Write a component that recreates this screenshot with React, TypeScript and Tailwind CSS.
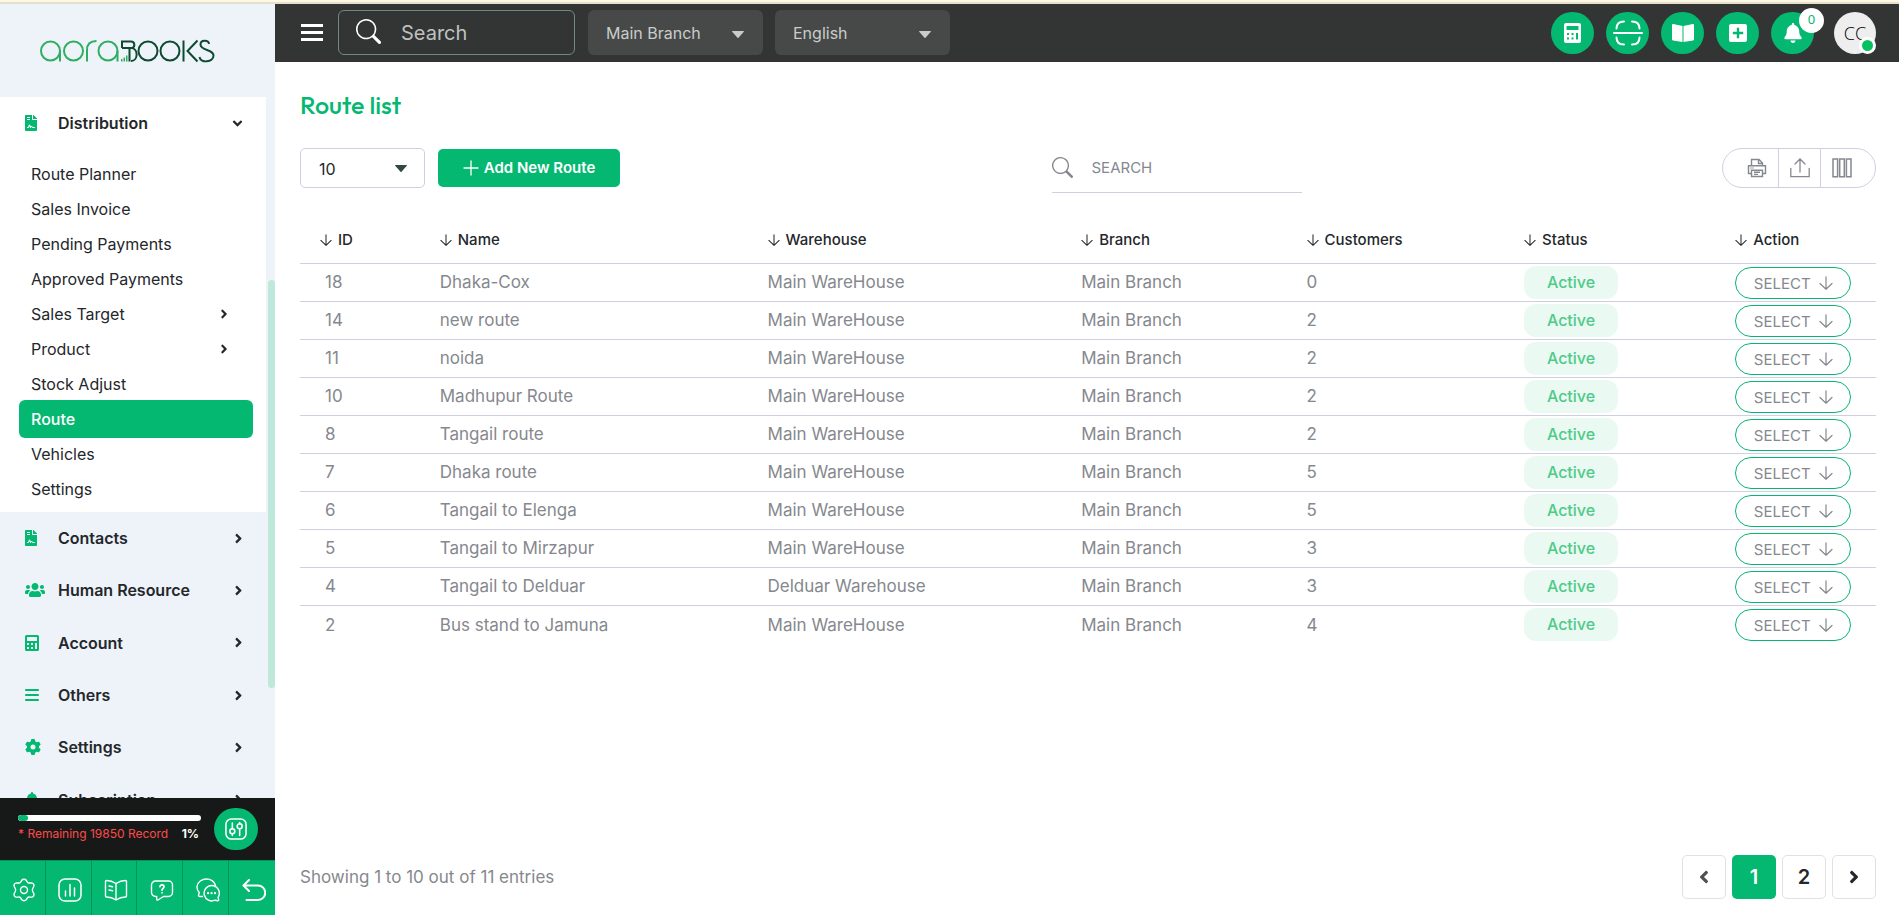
import React from "react";
import { BsSearch } from "react-icons/bs";
import { FaAngleDown, FaAngleLeft, FaAngleRight, FaFileContract, FaUsers } from "react-icons/fa";
import { FaGear, FaBars, FaBell } from "react-icons/fa6";

type Group = { label: string; icon: React.ReactNode };

const subItems = [
  { label: "Route Planner" },
  { label: "Sales Invoice" },
  { label: "Pending Payments" },
  { label: "Approved Payments" },
  { label: "Sales Target", nested: true },
  { label: "Product", nested: true },
  { label: "Stock Adjust" },
  { label: "Route", active: true },
  { label: "Vehicles" },
  { label: "Settings" },
];

const CalcOutline = () => (
  <svg viewBox="0 0 14 16" className="h-4 w-[14px]" fill="currentColor" aria-hidden="true">
    <path
      fillRule="evenodd"
      d="M1.5 0h11A1.5 1.5 0 0 1 14 1.500v13a1.500 1.500 0 0 1-1.500 1.500h-11A1.500 1.500 0 0 1 0 14.500v-13A1.500 1.500 0 0 1 1.500 0ZM2 2v4h10V2ZM2 8v2h2V8Zm4 0v2h2V8Zm-4 4v2h2v-2Zm4 0v2h2v-2Zm4-4v6h2V8Z"
    />
  </svg>
);

const CalcSolid = () => (
  <svg viewBox="0 0 17 20" className="h-5 w-[17px]" fill="currentColor" aria-hidden="true">
    <path
      fillRule="evenodd"
      d="M2 0h13a2 2 0 0 1 2 2v16a2 2 0 0 1-2 2H2a2 2 0 0 1-2-2V2a2 2 0 0 1 2-2ZM2.500 3v4h12V3ZM3 10v2h2v-2Zm4.500 0v2h2v-2ZM3 14.500v2h2v-2Zm4.500 0v2h2v-2ZM12 10v6.500h2V10Z"
    />
  </svg>
);

const groups: Group[] = [
  { label: "Contacts", icon: <FaFileContract className="h-4 w-3" /> },
  { label: "Human Resource", icon: <FaUsers size={20} /> },
  { label: "Account", icon: <CalcOutline /> },
  { label: "Others", icon: <FaBars className="h-4 w-[14px]" /> },
  { label: "Settings", icon: <FaGear size={16} /> },
  { label: "Subscription", icon: <FaBell className="h-4 w-[14px]" /> },
];

const rows = [
  [18, "Dhaka-Cox", "Main WareHouse", 0],
  [14, "new route", "Main WareHouse", 2],
  [11, "noida", "Main WareHouse", 2],
  [10, "Madhupur Route", "Main WareHouse", 2],
  [8, "Tangail route", "Main WareHouse", 2],
  [7, "Dhaka route", "Main WareHouse", 5],
  [6, "Tangail to Elenga", "Main WareHouse", 5],
  [5, "Tangail to Mirzapur", "Main WareHouse", 3],
  [4, "Tangail to Delduar", "Delduar Warehouse", 3],
  [2, "Bus stand to Jamuna", "Main WareHouse", 4],
];

const columns = [
  { label: "ID", width: "w-[7.6%]" },
  { label: "Name", width: "w-[20.8%]" },
  { label: "Warehouse", width: "w-[19.9%]" },
  { label: "Branch", width: "w-[14.3%]" },
  { label: "Customers", width: "w-[13.8%]" },
  { label: "Status", width: "w-[13.4%]" },
  { label: "Action", width: "w-[10.2%]" },
];

function Logo() {
  return (
    <svg viewBox="0 0 176 24" className="h-6 w-44" fill="none" strokeWidth="2" role="img" aria-label="aoraBooks">
      <g stroke="#2fae62">
        <circle cx="10.500" cy="12" r="9.500" />
        <path d="M20 12v10.500" />
        <circle cx="33.500" cy="12" r="9.500" />
        <path d="M47 22.500V11c0-6 3-9 9.500-9" />
        <circle cx="68" cy="12" r="9.500" />
        <path d="M77.500 12v10.500" />
      </g>
      <g fill="#2fae62">
        <path d="M81 20h1.500v2.500H81zM83.500 18.500H85v4h-1.500zM86 16.500h1.500v6H86z" />
      </g>
      <g stroke="#0d4a30">
        <path d="M82 9V2.500h9c4 0 4.500 5.500 1 6.500H82M91 9c7.500 0 7.500 13 0 13M89.500 9.500V22.500" />
        <circle cx="108" cy="12" r="9.500" />
        <circle cx="130" cy="12" r="9.500" />
        <path d="M143.500 1.500v21M157.500 1.500 147.500 12l10 10.500" />
        <path d="M169 5c-.5-4.500-8.500-4.500-8.500.5 0 6.500 13 4.500 13 11 0 7-13 8-14 1.500" />
      </g>
    </svg>
  );
}

const line = {
  fill: "none",
  stroke: "currentColor",
  strokeLinecap: "round" as const,
  strokeLinejoin: "round" as const,
  "aria-hidden": true,
};

const ArrowDown = ({ className }: { className: string }) => (
  <svg viewBox="0 0 14 14" className={className} strokeWidth="1.200" {...line}>
    <path d="M7 .8v12.400M1 7.500l6 5.700 6-5.700" />
  </svg>
);

const PlusLine = () => (
  <svg viewBox="0 0 16 16" className="size-4" strokeWidth="1.300" {...line}>
    <path d="M8 1v14M1 8h14" />
  </svg>
);

const GearLine = () => (
  <svg viewBox="0 0 24 24" className="size-6" strokeWidth="1.400" {...line}>
    <circle cx="12" cy="12" r="3.500" />
    <path d="M9.800 2.200c1-1.200 3.400-1.200 4.400 0l1.200 1.900c.5.700 1.200 1 2 .900l2.200-.1c1.700 0 2.900 2 2.200 3.600l-1.100 2c-.4.900-.4 2.100 0 3l1.100 2c.7 1.600-.5 3.600-2.200 3.600l-2.200-.1c-.8-.1-1.500.2-2 .9l-1.200 1.900c-1 1.200-3.400 1.200-4.400 0l-1.200-1.900c-.5-.7-1.200-1-2-.9l-2.200.1c-1.700 0-2.900-2-2.200-3.600l1.100-2c.4-.9.4-2.100 0-3l-1.100-2c-.7-1.600.5-3.600 2.200-3.600l2.200.1c.8.100 1.500-.2 2-.9z" />
  </svg>
);

const ChartLine = () => (
  <svg viewBox="0 0 24 24" className="size-6" strokeWidth="1.500" {...line}>
    <rect x="1" y="1" width="22" height="22" rx="6" />
    <path d="M7.500 13v5M12 6.500V18M16.500 10v8" />
  </svg>
);

const BookLine = () => (
  <svg viewBox="0 0 24 24" className="size-6" strokeWidth="1.400" {...line}>
    <path d="M12 5.500C9 3.500 5.500 2.500 2.500 2.500c-.6 0-1 .4-1 1V18c0 .6.400 1 1 1 3 .1 6.500 1 9.500 3 3-2 6.500-2.900 9.500-3 .6 0 1-.4 1-1V3.500c0-.6-.4-1-1-1-3 0-6.500 1-9.500 3zM12 5.500V22M5 8l3.500.8M5 12l3.500.8" />
  </svg>
);

const HelpLine = () => (
  <svg viewBox="0 0 24 24" className="size-6" strokeWidth="1.400" {...line}>
    <path d="M5.500 3h13A4 4 0 0 1 22.500 7v7.500a4 4 0 0 1-4 4h-5L8 22c-.7.400-1.300 0-1.300-.7v-2.800H5.500a4 4 0 0 1-4-4V7a4 4 0 0 1 4-4z" />
    <path d="M10 8.700c.2-2.400 4-2.400 4 0 0 1.600-2 1.800-2 3.500M12 14.700v.1" strokeWidth="1.700" />
  </svg>
);

const ChatLine = () => (
  <svg viewBox="0 0 24 24" className="size-6" strokeWidth="1.400" {...line}>
    <path d="M6.500 18.500H3.800c-1 0-1.500-.6-1.200-1.500l.6-2.500C1.500 12.500.8 10.500 1 8.500 1.500 4 6 1 10.500 1c4 0 7.500 2.300 9 6.200" />
    <path d="M15.500 7.500a7.700 7.700 0 1 0 3.500 14.700l2.700.6c.7.100 1.100-.4 1-1l-.6-2.500A7.700 7.700 0 0 0 15.500 7.500z" />
    <path d="M12 15.200h.1M15.500 15.200h.1M19 15.200h.1" strokeWidth="2.200" />
  </svg>
);

const ReturnLine = () => (
  <svg viewBox="0 0 24 24" className="size-6" strokeWidth="2" {...line}>
    <path d="M7 2 1.500 7.500 7 13M2 7.500h14a7 7 0 0 1 0 14.500H4.500" />
  </svg>
);

const SlidersLine = () => (
  <svg viewBox="0 0 24 24" className="size-[22px]" strokeWidth="1.700" {...line}>
    <rect x="1" y="1" width="22" height="22" rx="6" />
    <circle cx="8" cy="14.500" r="2.700" />
    <circle cx="16" cy="9" r="2.700" />
    <path d="M8 5.500v6.300M8 17.200V19M16 5v1.300M16 11.700V19" />
  </svg>
);

const ScanLine = () => (
  <svg viewBox="0 0 30 26" className="h-[26px] w-[30px]" strokeWidth="2" {...line}>
    <path d="M1 13h28M3.500 8.500C3.500 4 6 1.500 11 1.500M19 1.500c5 0 7.500 2.500 7.500 7M3.500 17.500c0 4.500 2.500 7 7.500 7M19 24.500c5 0 7.500-2.500 7.500-7" />
  </svg>
);

const BookSolid = () => (
  <svg viewBox="0 0 22 18" className="h-[18px] w-[22px]" fill="currentColor" aria-hidden="true">
    <path d="M0 1.200C0 .5.600 0 1.300.100L10.500 2v16L1 16.400c-.6-.1-1-.6-1-1.200zM22 1.200c0-.7-.6-1.200-1.300-1.100L11.500 2v16l9.500-1.600c.6-.1 1-.6 1-1.200z" />
  </svg>
);

const PlusSolid = () => (
  <svg viewBox="0 0 18 18" className="size-[18px]" fill="currentColor" aria-hidden="true">
    <path
      fillRule="evenodd"
      d="M2 0h14a2 2 0 0 1 2 2v14a2 2 0 0 1-2 2H2a2 2 0 0 1-2-2V2a2 2 0 0 1 2-2Zm5.800 3.800v4h-4v2.400h4v4h2.400v-4h4V7.800h-4v-4Z"
    />
  </svg>
);

const PrintLine = () => (
  <svg viewBox="0 0 20 20" className="size-5" strokeWidth="1.400" {...line} strokeLinecap="butt" strokeLinejoin="miter">
    <path d="M4.500 8V1.500h7.500L15.500 5v3M11.500 1.500V5.500h4M4.500 15.500H1.500V7.700h17v7.800h-3" />
    <path d="M4.500 12.200h11v6.300h-11zM7 14.300h6M7 16.400h4M3.500 10h1M5.500 10h1" />
  </svg>
);

const ExportLine = () => (
  <svg viewBox="0 0 20 20" className="size-5" strokeWidth="1.300" {...line} strokeLinejoin="miter">
    <path d="M10 14V1.500M5 6l5-5 5 5M.8 10.500v8.200h18.400v-8.200" />
  </svg>
);

const ColumnsLine = () => (
  <svg viewBox="0 0 20 20" className="size-5" strokeWidth="1.500" {...line} strokeLinejoin="miter">
    <path d="M1 1h4.600v17.800H1zM7.700 1h4.600v17.800H7.700zM14.400 1H19v17.800h-4.600z" />
  </svg>
);

const bottomTools = [
  { label: "Settings", icon: <GearLine /> },
  { label: "Reports", icon: <ChartLine /> },
  { label: "Ledger", icon: <BookLine /> },
  { label: "Help", icon: <HelpLine /> },
  { label: "Chat", icon: <ChatLine /> },
  { label: "Back", icon: <ReturnLine /> },
];

function Sidebar() {
  return (
    <aside className="relative flex w-[275px] shrink-0 flex-col bg-[#edf3f8] text-[#24272b]">
      <div className="flex h-[93px] shrink-0 items-center pl-10">
        <a href="#home">
          <Logo />
        </a>
      </div>
      <nav className="min-h-0 flex-1 overflow-hidden pr-[9px]" aria-label="Main menu">
        <div className="bg-white pb-[6px]">
          <button className="flex h-[52px] w-full items-center pr-[21px] pl-[25px] text-left font-semibold">
            <span className="w-[33px] shrink-0 text-[#04b871]">
              <FaFileContract className="h-4 w-3" />
            </span>
            <span className="flex-1">Distribution</span>
            <FaAngleDown size={15} />
          </button>
          <ul className="mt-[7px] pr-[13px] pl-[19px]">
            {subItems.map((item) => (
              <li key={item.label} className="flex h-[35px] items-center">
                <a
                  href="#menu"
                  className={
                    item.active
                      ? "flex h-[38px] w-full shrink-0 items-center rounded-md bg-[#04b871] px-3 font-medium text-white"
                      : "flex h-[38px] w-full shrink-0 items-center pr-[22px] pl-3"
                  }
                >
                  <span className="flex-1">{item.label}</span>
                  {item.nested && <FaAngleRight size={14} />}
                </a>
              </li>
            ))}
          </ul>
        </div>
        <div className="grid h-[314px] auto-rows-fr">
          {groups.map((g) => (
            <button key={g.label} className="flex w-full items-center pr-5 pl-[25px] text-left font-semibold">
              <span className="w-[33px] shrink-0 text-[#04b871]">{g.icon}</span>
              <span className="flex-1">{g.label}</span>
              <FaAngleRight size={15} />
            </button>
          ))}
        </div>
      </nav>
      <div className="absolute top-[276px] right-0 h-[408px] w-[7px] rounded-full bg-[#bde8da]" />
      <div className="flex h-[62px] shrink-0 items-center justify-between bg-[#171918] pr-[17px] pl-[18px]">
        <div className="w-[183px]">
          <div className="h-[6px] overflow-hidden rounded-full bg-white">
            <div className="h-full w-[10px] rounded-full bg-[#04b871]" />
          </div>
          <p className="mt-[3px] flex justify-between pr-[2px] text-xs leading-5 whitespace-nowrap text-[#ff4a4a]">
            * Remaining 19850 Record <b className="font-bold text-white">1%</b>
          </p>
        </div>
        <button
          aria-label="Preferences"
          className="flex h-[42px] w-11 items-center justify-center rounded-full bg-[#04b871] text-white"
        >
          <SlidersLine />
        </button>
      </div>
      <div className="grid h-[55px] shrink-0 grid-cols-6 border-t border-[#04935b] bg-[#04b871] text-white">
        {bottomTools.map((t) => (
          <button
            key={t.label}
            aria-label={t.label}
            className="flex items-center justify-center border-r border-[#04935b] pt-1 pl-1 last:border-r-0"
          >
            {t.icon}
          </button>
        ))}
      </div>
    </aside>
  );
}

function Select({ label, value, box, caret }: { label: string; value: string; box: string; caret: string }) {
  return (
    <div className="relative">
      <select aria-label={label} className={box} defaultValue={value}>
        <option>{value}</option>
      </select>
      <svg viewBox="0 0 12 7" className={caret} fill="currentColor" aria-hidden="true">
        <path d="M.5 0h11c.4 0 .6.500.3.800L6.500 6.700a.7.700 0 0 1-1 0L.200.800C-.1.500.100 0 .5 0z" />
      </svg>
    </div>
  );
}

function TopBar() {
  const darkBox = "block h-[45px] w-[175px] appearance-none rounded-md bg-[#464948] pl-[18px] text-base text-[#c9cccb]";
  const darkCaret = "pointer-events-none absolute top-[21px] right-[19px] h-[7px] w-3 text-[#c9cccb]";
  const round = "relative flex h-[42px] w-[43px] items-center justify-center rounded-full bg-[#04b871] text-white";
  return (
    <header className="flex h-[58px] shrink-0 items-center justify-between border-b border-[#35303a] bg-[#323534] pr-[23px] pl-[26px]">
      <div className="flex items-center">
        <button aria-label="Toggle menu" className="flex w-[22px] flex-col gap-1">
          <span className="h-[3px] bg-white" />
          <span className="h-[3px] bg-white" />
          <span className="h-[3px] bg-white" />
        </button>
        <label className="ml-[15px] flex h-[45px] w-[237px] items-center rounded-md border border-[#6f8a80] pl-[17px] text-white">
          <BsSearch size={25} className="mb-[2px] shrink-0" />
          <input
            aria-label="Search"
            placeholder="Search"
            className="ml-5 w-36 bg-transparent text-xl outline-none placeholder:text-[#bfc1c1]"
          />
        </label>
        <div className="ml-[13px] flex gap-3">
          <Select label="Branch" value="Main Branch" box={darkBox} caret={darkCaret} />
          <Select label="Language" value="English" box={darkBox} caret={darkCaret} />
        </div>
      </div>
      <div className="flex items-center gap-3">
        <button aria-label="Calculator" className={round}>
          <CalcSolid />
        </button>
        <button aria-label="Scan" className={round}>
          <ScanLine />
        </button>
        <button aria-label="Journal" className={round}>
          <BookSolid />
        </button>
        <button aria-label="Add" className={round}>
          <PlusSolid />
        </button>
        <button aria-label="Notifications" className={round}>
          <FaBell size={20} />
          <span className="absolute -top-1 -right-[10px] flex size-[25px] items-center justify-center rounded-full bg-white font-['Noto_Sans',sans-serif] text-[13px] text-[#04b871]">
            0
          </span>
        </button>
        <button
          aria-label="Profile"
          className="relative ml-2 flex size-[42px] items-center justify-center rounded-full bg-[#efeeee] font-['Open_Sans',sans-serif] text-lg font-light text-black"
        >
          CC
          <span className="absolute right-0 bottom-0 size-[17px] rounded-full border-[3px] border-white bg-[#07c160]" />
        </button>
      </div>
    </header>
  );
}

function Toolbar() {
  return (
    <div className="mt-[22px] flex items-center justify-between">
      <div className="flex items-center gap-[13px]">
        <Select
          label="Entries per page"
          value="10"
          box="block h-10 w-[125px] appearance-none rounded-[5px] border border-[#d0cfe2] bg-white pt-[2px] pl-[18px] text-base text-[#24272b]"
          caret="pointer-events-none absolute top-[17px] right-[18px] h-[7px] w-3 text-[#324842]"
        />
        <button className="flex h-[38px] w-[182px] items-center justify-center gap-[5px] rounded-[5px] bg-[#04b871] text-[15px] font-semibold text-white">
          <PlusLine />
          Add New Route
        </button>
      </div>
      <label className="ml-[11px] flex h-[50px] w-[250px] items-center border-b border-[#d0cfe2] text-[#85888e]">
        <BsSearch size={21} className="shrink-0" />
        <input
          aria-label="Search routes"
          placeholder="SEARCH"
          className="ml-[19px] w-40 bg-transparent pt-[2px] text-[15px] outline-none placeholder:text-[#85888e]"
        />
      </label>
      <div className="flex h-10 w-[154px] rounded-full border border-[#d0cfe2] text-[#85888e]">
        <button aria-label="Print" className="flex w-14 items-center justify-end border-r border-[#d0cfe2] pr-[11px]">
          <PrintLine />
        </button>
        <button aria-label="Export" className="flex w-[42px] items-center justify-center border-r border-[#d0cfe2]">
          <ExportLine />
        </button>
        <button aria-label="Columns" className="flex flex-1 items-center pl-[11px]">
          <ColumnsLine />
        </button>
      </div>
    </div>
  );
}

function RouteTable() {
  return (
    <table className="mt-[18px] w-full table-fixed border-collapse text-left">
      <thead>
        <tr className="h-[52px] border-b border-[#d0cfe2] text-[15px] text-[#24272b]">
          {columns.map((c) => (
            <th key={c.label} className={`${c.width} pt-[6px] pl-5 font-medium`}>
              <span className="flex items-center gap-[6px]">
                <ArrowDown className="size-3" />
                {c.label}
              </span>
            </th>
          ))}
        </tr>
      </thead>
      <tbody className="text-[17px] text-[#85888e]">
        {rows.map(([id, name, warehouse, customers]) => (
          <tr key={id} className="h-[38px] border-b border-[#d0cfe2] last:border-b-0">
            <td className="pt-[2px] pl-[25px]">{id}</td>
            <td className="pt-[2px] pl-5">{name}</td>
            <td className="pt-[2px] pl-5">{warehouse}</td>
            <td className="pt-[2px] pl-5">Main Branch</td>
            <td className="pt-[2px] pl-5">{customers}</td>
            <td className="pl-5">
              <span className="flex h-[33px] w-[94px] items-center justify-center rounded-xl bg-[#ebf9f3] text-base font-medium text-[#4ecb88]">
                Active
              </span>
            </td>
            <td className="pt-[2px] pl-5">
              <button className="flex h-8 w-[116px] items-center justify-center gap-2 rounded-full border border-[#04b871] pt-[2px] text-[15px]">
                SELECT
                <ArrowDown className="mb-[2px] size-[14px]" />
              </button>
            </td>
          </tr>
        ))}
      </tbody>
    </table>
  );
}

export default function App() {
  const page = "flex size-11 items-center justify-center rounded-[5px] border border-[#dee2e6] text-xl font-semibold";
  return (
    <div className="flex h-screen flex-col bg-white font-['Inter',sans-serif] text-base">
      <div className="h-1 shrink-0 border-b-2 border-[#e6e0cb] bg-[#fdf8e6]" />
      <div className="flex min-h-0 flex-1">
        <Sidebar />
        <div className="flex min-w-0 flex-1 flex-col">
          <TopBar />
          <main className="flex flex-1 flex-col pr-[23px] pb-4 pl-[25px]">
            <h1 className="mt-[27px] font-['Outfit','Lato',sans-serif] text-[25px] leading-8 font-medium text-[#04b871]">
              Route list
            </h1>
            <Toolbar />
            <RouteTable />
            <footer className="mt-auto flex items-center justify-between text-[17px] text-[#85888e]">
              <p className="pt-[2px]">Showing 1 to 10 out of 11 entries</p>
              <nav aria-label="Pagination" className="flex gap-[6px] text-[#24272b]">
                <button aria-label="Previous page" className={`${page} text-[#4d5054]`}>
                  <FaAngleLeft size={20} />
                </button>
                <button className="flex size-11 items-center justify-center rounded-[5px] bg-[#04b871] text-xl font-semibold text-white">
                  1
                </button>
                <button className={page}>2</button>
                <button aria-label="Next page" className={page}>
                  <FaAngleRight size={20} />
                </button>
              </nav>
            </footer>
          </main>
        </div>
      </div>
    </div>
  );
}
